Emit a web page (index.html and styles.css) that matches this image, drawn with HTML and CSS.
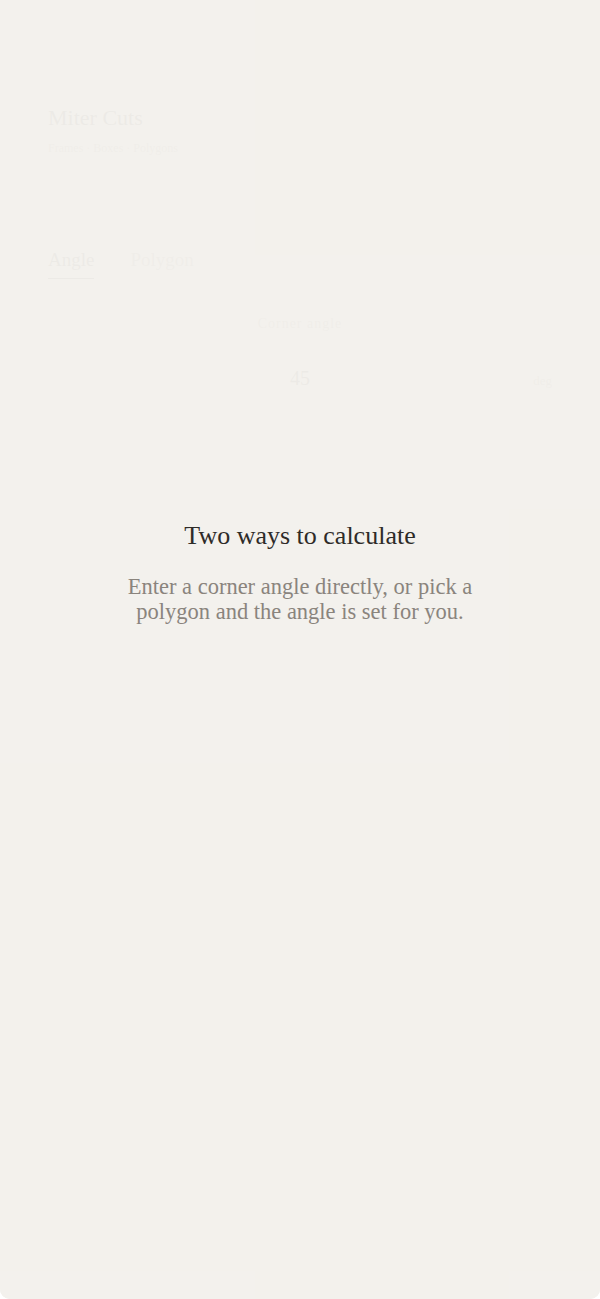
FILE: index.html
```html
<!DOCTYPE html>
<html lang="en">
<head>
<meta charset="utf-8">
<title>Miter Cuts</title>
<link rel="stylesheet" href="styles.css">
</head>
<body>
<div class="app">
  <div class="screen">
    <header class="header">
      <h1 class="title">Miter Cuts</h1>
      <p class="subtitle">Frames · Boxes · Polygons</p>
    </header>
    <nav class="tabs">
      <span class="tab active">Angle</span>
      <span class="tab">Polygon</span>
    </nav>
    <section class="field">
      <div class="label">Corner angle</div>
      <div class="input-row">
        <span class="value">45</span>
        <span class="unit">deg</span>
      </div>
    </section>
  </div>
  <div class="overlay">
    <div class="intro">
      <h2 class="intro-title">Two ways to calculate</h2>
      <p class="intro-text">Enter a corner angle directly, or pick a polygon and the angle is set for you.</p>
    </div>
  </div>
</div>
</body>
</html>
```

FILE: styles.css
```css
* { box-sizing: border-box; }
html, body { margin: 0; padding: 0; }
body {
  background: #ffffff;
  font-family: "Liberation Serif", "DejaVu Serif", serif;
}
.app {
  position: relative;
  width: 600px;
  height: 1299px;
  background: #f3f1ec;
  border-radius: 0 0 10px 10px;
  overflow: hidden;
}
.screen {
  padding: 104px 48px 0;
  color: #2e2b28;
}
.header { display: flex; flex-direction: column; gap: 8px; }
.title { margin: 0; font-size: 22px; font-weight: 400; line-height: 28px; }
.subtitle { margin: 0; font-size: 12px; color: #8a847d; line-height: 16px; }
.tabs {
  display: flex;
  gap: 36px;
  margin-top: 91px;
}
.tab { font-size: 19px; line-height: 26px; padding-bottom: 5px; color: #8a847d; }
.tab.active { color: #2e2b28; border-bottom: 1px solid #2e2b28; }
.field { margin-top: 37px; display: flex; flex-direction: column; align-items: center; }
.label { font-size: 14px; letter-spacing: 1px; color: #8a847d; }
.input-row {
  width: 100%;
  margin-top: 35px;
  display: flex;
  justify-content: space-between;
  align-items: baseline;
  padding-left: 242px;
}
.value { font-size: 20px; }
.unit { font-size: 13px; color: #8a847d; }

.overlay {
  position: absolute;
  inset: 0;
  background: rgba(243, 241, 236, 0.97);
  display: flex;
  justify-content: center;
}
.intro {
  margin-top: 519px;
  width: 360px;
  text-align: center;
}
.intro-title {
  margin: 0;
  font-size: 26px;
  font-weight: 400;
  line-height: 34px;
  color: #2e2b28;
}
.intro-text {
  margin: 21px 0 0;
  font-size: 22.5px;
  line-height: 25px;
  color: #8a847d;
}
```
